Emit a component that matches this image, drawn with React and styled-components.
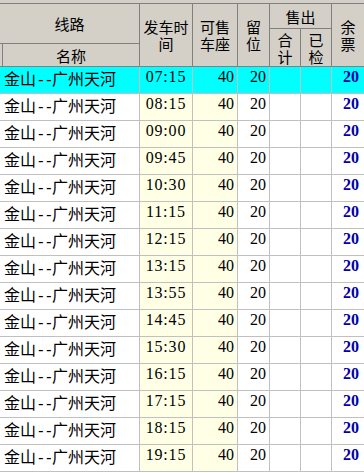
import React from 'react';
import styled, { createGlobalStyle } from 'styled-components';

const GlobalStyle = createGlobalStyle`
  html, body {
    margin: 0;
    padding: 0;
    background: #ffffff;
  }
  body {
    width: 364px;
    height: 473px;
    overflow: hidden;
    font-family: "Noto Sans CJK SC", sans-serif;
  }
`;

const COLUMNS = '139px 52px 44px 31px 30px 30px 32px';

const Sheet = styled.div`
  width: 364px;
  display: flex;
  flex-direction: column;
`;

const TopStrip = styled.div`
  height: 3px;
  background: #d4d0c8;
`;

const Header = styled.div`
  display: grid;
  grid-template-columns: ${COLUMNS};
  grid-template-rows: 24px 14px 22px;
  gap: 1px;
  padding: 1px 0;
  background: #808080;
`;

const HeadCell = styled.div`
  grid-column: ${({ col }) => col};
  grid-row: ${({ row }) => row};
  background: #d4d0c8;
  display: flex;
  align-items: center;
  justify-content: center;
  text-align: center;
  color: #000;
  font-size: 15px;
  line-height: 17px;
`;

const Stub = styled.div`
  width: 2px;
  align-self: stretch;
  border-right: 1px solid #808080;
`;

const SubLabel = styled.div`
  flex: 1;
  text-align: center;
`;

const Row = styled.div`
  display: grid;
  grid-template-columns: ${COLUMNS};
  column-gap: 1px;
  height: 26px;
  padding-bottom: 1px;
  background: #c0c0c0;
`;

const Cell = styled.div`
  background: ${({ active, tint }) => (active ? '#00ffff' : tint ? '#ffffe6' : '#ffffff')};
  display: flex;
  align-items: flex-start;
  justify-content: ${({ align }) => align || 'flex-start'};
  padding: ${({ pad }) => pad || '0'};
  color: #000;
  white-space: nowrap;
`;

const Name = styled.span`
  font-family: "Noto Sans CJK SC", sans-serif;
  font-size: 16px;
  line-height: 22px;
`;

const Dash = styled.span`
  font-family: "DejaVu Sans Mono", monospace;
  font-size: 16px;
  letter-spacing: -1.6px;
`;

const Num = styled.span`
  font-family: "Liberation Serif", serif;
  font-size: 16px;
  line-height: 20px;
  letter-spacing: ${({ spaced }) => (spaced ? '0.8px' : '0')};
  font-weight: ${({ strong }) => (strong ? 'bold' : 'normal')};
  color: ${({ strong }) => (strong ? '#0000a8' : '#000')};
`;

const times = [
  '07:15', '08:15', '09:00', '09:45', '10:30', '11:15', '12:15', '13:15',
  '13:55', '14:45', '15:30', '16:15', '17:15', '18:15', '19:15',
];

const App = () => (
  <>
    <GlobalStyle />
    <Sheet>
      <TopStrip />
      <Header>
        <HeadCell col="1" row="1 / 3">线路</HeadCell>
        <HeadCell col="1" row="3">
          <Stub />
          <SubLabel>名称</SubLabel>
        </HeadCell>
        <HeadCell col="2" row="1 / 4">发车时<br />间</HeadCell>
        <HeadCell col="3" row="1 / 4">可售<br />车座</HeadCell>
        <HeadCell col="4" row="1 / 4">留<br />位</HeadCell>
        <HeadCell col="5 / 7" row="1">售出</HeadCell>
        <HeadCell col="5" row="2 / 4">合<br />计</HeadCell>
        <HeadCell col="6" row="2 / 4">已<br />检</HeadCell>
        <HeadCell col="7" row="1 / 4">余<br />票</HeadCell>
      </Header>
      {times.map((t, i) => {
        const active = i === 0;
        return (
          <Row key={t}>
            <Cell active={active} pad="0 0 0 4px">
              <Name>金山<Dash>--</Dash>广州天河</Name>
            </Cell>
            <Cell active={active} tint align="center">
              <Num spaced>{t}</Num>
            </Cell>
            <Cell active={active} tint align="flex-end" pad="0 3px 0 0">
              <Num>40</Num>
            </Cell>
            <Cell active={active} align="flex-end" pad="0 3px 0 0">
              <Num>20</Num>
            </Cell>
            <Cell active={active} />
            <Cell active={active} />
            <Cell active={active} align="flex-end" pad="0 5px 0 0">
              <Num strong>20</Num>
            </Cell>
          </Row>
        );
      })}
    </Sheet>
  </>
);

export default App;
